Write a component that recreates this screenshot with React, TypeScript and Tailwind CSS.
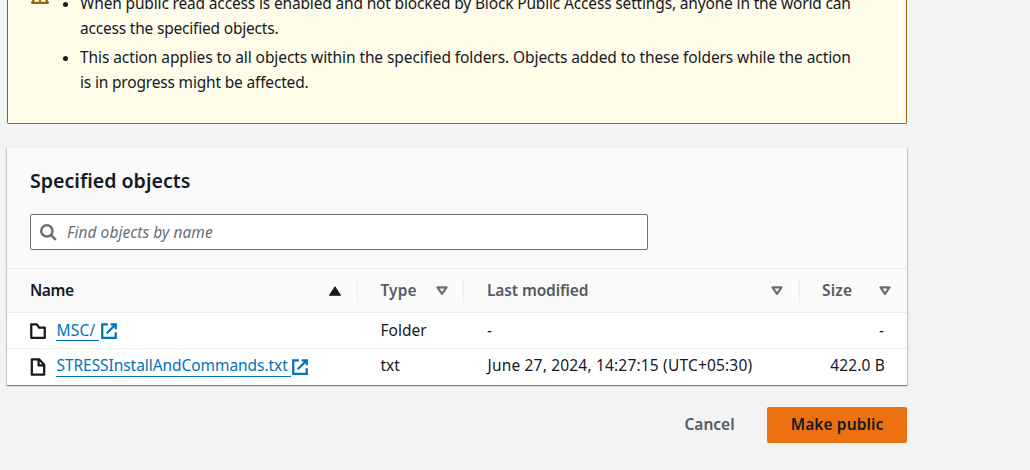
import React from "react";

function ExternalIcon() {
  return (
    <svg width="18" height="18" viewBox="0 0 16 16" fill="none" stroke="currentColor" strokeWidth="2" className="shrink-0">
      <path d="M9.5 2H14v4.5M6 10l7.6-7.6M14 9.048V14H2V2h5" />
    </svg>
  );
}

function FolderIcon() {
  return (
    <svg width="18" height="18" viewBox="0 0 16 16" fill="none" stroke="currentColor" strokeWidth="2" strokeLinejoin="round">
      <path d="M2 2v12h12V5H9L7 2Z" />
    </svg>
  );
}

function FileIcon() {
  return (
    <svg width="18" height="18" viewBox="0 0 16 16" fill="none" stroke="currentColor" strokeWidth="2" strokeLinejoin="round">
      <path d="M2.5 1.2v13.6h11V6L9 1.2Z" />
      <path d="M8.5 1.2v5.3h5" />
    </svg>
  );
}

function SortIcon({ active = false }: { active?: boolean }) {
  return (
    <svg width="18" height="18" viewBox="0 0 16 16" className="shrink-0">
      {active ? (
        <path d="M3.2 11.8h9.6L8 4.4Z" fill="#16191f" stroke="#16191f" strokeLinejoin="round" />
      ) : (
        <path d="M4 4.8h8L8 10.6Z" fill="none" stroke="#687078" strokeWidth="2" strokeLinejoin="round" />
      )}
    </svg>
  );
}

function WarningIcon() {
  return (
    <svg width="18" height="18" viewBox="0 0 16 16" fill="none" stroke="#906806" strokeWidth="2">
      <path d="M8 1.5 1 14h14Z" strokeLinejoin="round" />
      <path d="M8 6v4M8 11v2" />
    </svg>
  );
}

function Divider() {
  return <div className="h-[22px] w-px shrink-0 bg-[#eaeded]" />;
}

const columns = "grid grid-cols-[351px_106px_336px_107px]";

export default function App() {
  return (
    <div className="h-[470px] w-[1030px] overflow-hidden bg-[#f2f3f3] pl-[7px] font-['Noto_Sans','Open_Sans',sans-serif] text-[15.5px] text-[#16191f]">
      <section className="flex h-[124px] w-[900px] rounded-b-[2px] border border-t-0 border-[#906806] bg-[#fffce9] pl-[23px]">
        <div className="-mt-[13px] h-[18px] w-[18px]">
          <WarningIcon />
        </div>
        <ul className="-mt-[9px] ml-[13px] w-[800px] whitespace-nowrap leading-[25px]">
          <li className="flex">
            <span className="mt-[11px] mr-[12px] ml-[1px] size-[5px] shrink-0 rounded-full bg-[#16191f]" />
            <div>
              <p className="tracking-[-0.16px]">When public read access is enabled and not blocked by Block Public Access settings, anyone in the world can</p>
              <p className="tracking-[-0.2px]">access the specified objects.</p>
            </div>
          </li>
          <li className="mt-[4px] flex">
            <span className="mt-[11px] mr-[12px] ml-[1px] size-[5px] shrink-0 rounded-full bg-[#16191f]" />
            <div>
              <p className="tracking-[-0.09px]">This action applies to all objects within the specified folders. Objects added to these folders while the action</p>
              <p className="tracking-[-0.18px]">is in progress might be affected.</p>
            </div>
          </li>
        </ul>
      </section>

      <section className="mt-[24px] h-[237px] w-[900px] bg-white shadow-[0_1px_1px_0_rgba(0,28,36,0.3),1px_1px_1px_0_rgba(0,28,36,0.15),-1px_1px_1px_0_rgba(0,28,36,0.15),0_0_0_1px_rgba(0,28,36,0.02)]">
        <header className="h-[120px] bg-[#fafafa] px-[23px] pt-[19px]">
          <h2 className="flex h-[27px] items-center text-[19.6px] font-semibold"><span>Specified objects</span></h2>
          <div className="mt-[20px] flex h-[36px] w-[618px] items-center rounded-[2px] border border-[#687078] bg-white pl-[8px] text-[#687078]">
            <svg width="18" height="18" viewBox="0 0 16 16" fill="none" stroke="currentColor" strokeWidth="2.2">
              <circle cx="7" cy="7" r="5" />
              <path d="m15 15-4.5-4.5" />
            </svg>
            <span className="ml-[10px] pt-[2px] tracking-[0.05px] italic">Find objects by name</span>
          </div>
        </header>
        <div className={`${columns} h-[45px] items-center border-y border-[#eaeded] bg-[#fafafa] font-semibold text-[#545b64]`}>
          <div className="flex items-center pl-[23px] text-[#16191f]">
            <span className="grow tracking-[-0.45px]">Name</span><SortIcon active /><div className="w-[13px]" /><Divider />
          </div>
          <div className="flex items-center pl-[22.5px]">
            <span className="grow tracking-[0.1px]">Type</span><SortIcon /><div className="w-[12px]" /><Divider />
          </div>
          <div className="flex items-center pl-[23px]">
            <span className="grow tracking-[-0.12px]">Last modified</span><SortIcon /><div className="w-[13px]" /><Divider />
          </div>
          <div className="flex items-center pl-[22px]">
            <span className="grow tracking-[0.2px]">Size</span><SortIcon /><div className="w-[13px]" />
          </div>
        </div>
        <div className={`${columns} h-[36px] items-center border-b border-[#eaeded]`}>
          <div className="flex items-center pl-[22px]">
            <FolderIcon />
            <a className="ml-[9px] flex items-center text-[#0073bb]">
              <span className="mr-px h-[20px] w-[43px] border-b border-[#0073bb] pl-[0.5px] leading-[19px] tracking-[0.2px]">MSC/</span><ExternalIcon />
            </a>
          </div>
          <span className="pl-[22.5px]">Folder</span>
          <span className="pl-[23px]">-</span>
          <span className="pr-[23px] text-right">-</span>
        </div>
        <div className={`${columns} h-[36px] items-center`}>
          <div className="flex items-center pl-[22px]">
            <FileIcon />
            <a className="ml-[9px] flex items-center text-[#0073bb]">
              <span className="h-[20px] w-[235px] border-b border-[#0073bb] pl-[0.5px] leading-[17px] tracking-[-0.06px]">STRESSInstallAndCommands.txt</span><ExternalIcon />
            </a>
          </div>
          <span className="pb-[3px] pl-[22.5px]">txt</span>
          <span className="pb-[3px] pl-[23.5px] tracking-[0.18px]">June 27, 2024, 14:27:15 (UTC+05:30)</span>
          <span className="pr-[22px] pb-[3px] text-right tracking-[0.15px]">422.0 B</span>
        </div>
      </section>

      <footer className="mt-[22px] flex h-[36px] w-[900px] items-center justify-end font-semibold">
        <button className="mr-[32px] w-[51px] whitespace-nowrap text-[#545b64]">Cancel</button>
        <button className="h-[36px] w-[140px] rounded-[2px] bg-[#ec7211] tracking-[0.1px]">Make public</button>
      </footer>
    </div>
  );
}
